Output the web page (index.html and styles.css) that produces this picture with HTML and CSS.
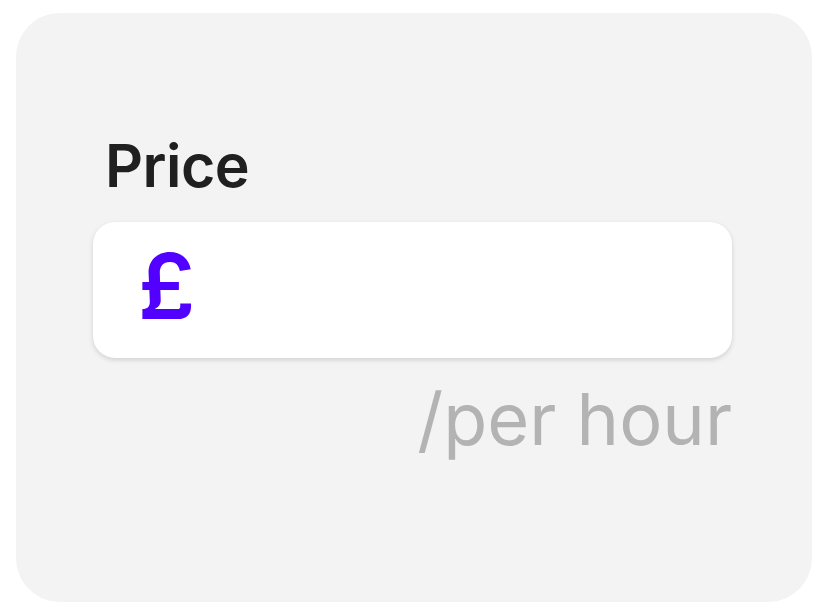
FILE: index.html
```html
<!DOCTYPE html>
<html lang="en">
<head>
    <meta charset="UTF-8">
    <meta name="viewport" content="width=device-width, initial-scale=1.0">
    <title>Price</title>
    <link rel="stylesheet" href="styles.css">
</head>
<body>

    <div class="card">
        <label class="price-label" for="price-input">Price</label>

        <div class="price-field">
            <span class="currency">£</span>
            <input type="text" id="price-input" class="price-input">
        </div>

        <p class="unit">/per hour</p>
    </div>

</body>
</html>
```

FILE: styles.css
```css
:root {
    --card-bg: #f3f3f3;
    --text-color: #202020;
    --accent: #5200ff;
    --muted: #b3b3b3;
    --white: #ffffff;
}

* {
    box-sizing: border-box;
    margin: 0;
    padding: 0;
}

body {
    font-family: Inter, "Noto Sans", Arial, sans-serif;
    background-color: var(--white);
    padding: 13px 16px;
}

.card {
    width: 796px;
    height: 589px;
    background-color: var(--card-bg);
    border-radius: 44px;
    padding: 123px 80px 0 77px;
    display: flex;
    flex-direction: column;
}

.price-label {
    font-size: 59px;
    font-weight: 600;
    line-height: 1;
    color: var(--text-color);
    padding-left: 12px;
    letter-spacing: -0.5px;
}

.price-field {
    margin-top: 27px;
    height: 136px;
    background-color: var(--white);
    border-radius: 22px;
    box-shadow: 0 2px 5px rgba(0, 0, 0, 0.14);
    display: flex;
    align-items: center;
    padding-left: 45px;
}

.currency {
    font-size: 91px;
    font-weight: 600;
    line-height: 1;
    color: var(--accent);
    margin-top: -8px;
}

.price-input {
    flex: 1;
    height: 100%;
    border: none;
    outline: none;
    background: transparent;
    font: inherit;
}

.unit {
    margin-top: 25px;
    align-self: flex-end;
    font-size: 72px;
    line-height: 1;
    color: var(--muted);
}
```
